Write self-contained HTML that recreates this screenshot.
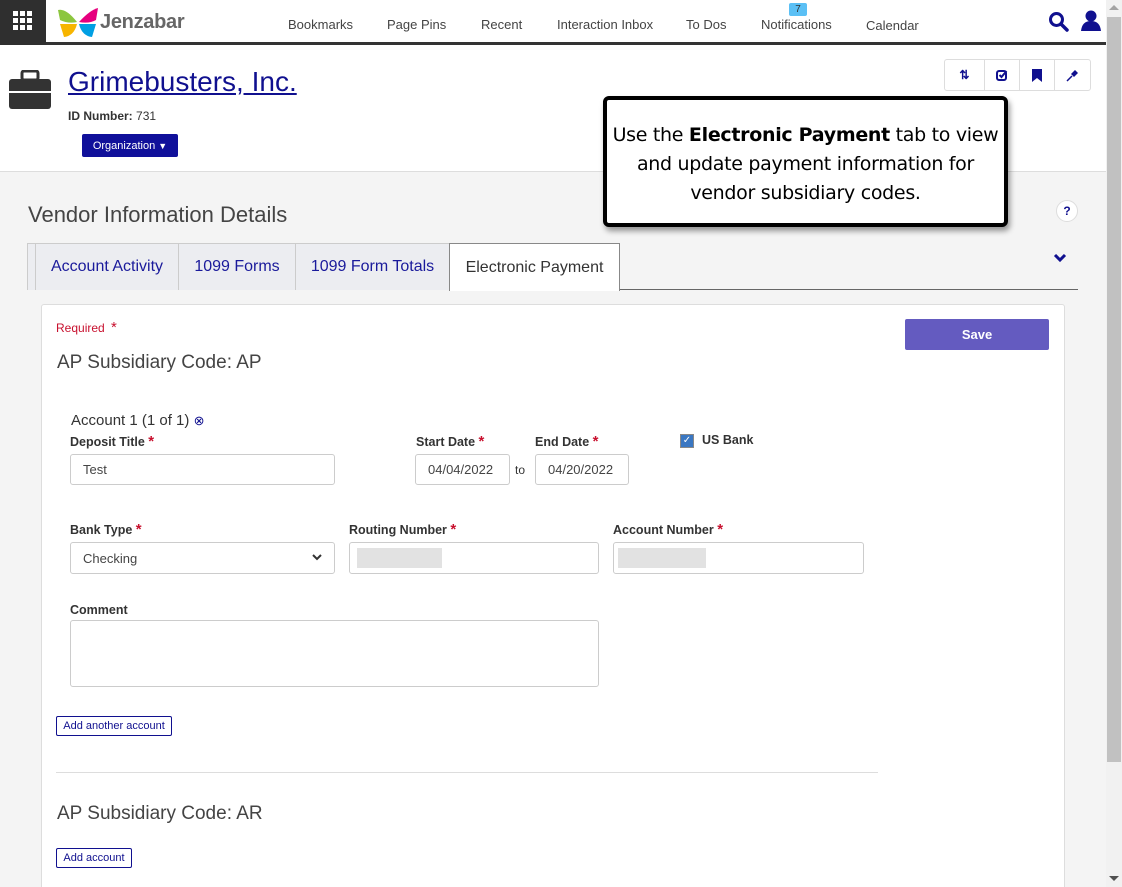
<!DOCTYPE html>
<html><head><meta charset="utf-8"><style>
*{box-sizing:border-box;margin:0;padding:0}
html,body{width:1122px;height:887px;overflow:hidden}
body{position:relative;background:#f4f4f4;font-family:"Liberation Sans",Arial,sans-serif;color:#333}
.a{position:absolute}
.top{left:0;top:0;width:1106px;height:45px;background:#fff;border-bottom:3px solid #333}
.grid{left:0;top:0;width:46px;height:45px;background:#2f2f2f}
.nav{top:17px;font-size:13px;color:#444}
.hdr{left:0;top:45px;width:1106px;height:127px;background:#fff;border-bottom:1px solid #ddd}
.lbl{font-size:12.5px;font-weight:bold;color:#333}
.st{color:#c8102e;font-weight:bold;font-size:15px}
.inp{background:#fff;border:1px solid #ccc;border-radius:3px;font-size:13px;color:#444;padding:0 12px;display:flex;align-items:center}
.h{font-family:"Liberation Sans",sans-serif;color:#444}
.tab{top:243px;height:47px;border:1px solid #ccc;border-bottom:none;background:#ecedf1;color:#1a1a9b;font-size:16px;display:flex;align-items:center;justify-content:center}
.btn{border:1px solid #10108f;border-radius:2px;background:#fff;color:#10108f;font-size:11px;display:flex;align-items:center;justify-content:center}
.blur{background:#e2e2e2;height:20px}
</style></head><body>
<div class="a top"></div>
<div class="a grid"><svg width="46" height="45"><g fill="#fff">
<rect x="13" y="11" width="5" height="5"/><rect x="20" y="11" width="5" height="5"/><rect x="27" y="11" width="5" height="5"/>
<rect x="13" y="18" width="5" height="5"/><rect x="20" y="18" width="5" height="5"/><rect x="27" y="18" width="5" height="5"/>
<rect x="13" y="25" width="5" height="5"/><rect x="20" y="25" width="5" height="5"/><rect x="27" y="25" width="5" height="5"/></g></svg></div>
<svg class="a" style="left:56px;top:6px" width="44" height="33"><path d="M2 4 Q10 2 21 16 Q12 18 4 14Z" fill="#8cc63f"/><path d="M42 2 Q34 4 23 16 Q33 18 40 14Z" fill="#e6007e"/><path d="M4 18 Q14 18 21 18 Q18 30 8 31Z" fill="#f7b500"/><path d="M40 18 Q30 18 23 18 Q26 30 36 31Z" fill="#009fe3"/></svg>
<div class="a" style="left:100px;top:11px;font-size:20px;color:#666;font-weight:bold;letter-spacing:-0.3px">Jenzabar</div>
<div class="a nav" style="left:288px">Bookmarks</div>
<div class="a nav" style="left:387px">Page Pins</div>
<div class="a nav" style="left:481px">Recent</div>
<div class="a nav" style="left:557px">Interaction Inbox</div>
<div class="a nav" style="left:686px">To Dos</div>
<div class="a nav" style="left:761px">Notifications</div>
<div class="a" style="left:789px;top:3px;width:18px;height:13px;background:#5bc0f5;border-radius:2px;font-size:10px;text-align:center;line-height:13px;color:#333">7</div>
<div class="a nav" style="left:866px;top:18px">Calendar</div>
<svg class="a" style="left:1048px;top:11px" width="22" height="22"><circle cx="8.5" cy="8.5" r="6" fill="none" stroke="#10108f" stroke-width="3"/><path d="M13 13 L19 19" stroke="#10108f" stroke-width="3.5" stroke-linecap="round"/></svg>
<svg class="a" style="left:1080px;top:10px" width="22" height="22"><circle cx="11" cy="6" r="5.5" fill="#10108f"/><path d="M1 21 Q2 11 11 11 Q20 11 21 21Z" fill="#10108f"/></svg>
<div class="a hdr"></div>
<svg class="a" style="left:8px;top:70px" width="44" height="40"><rect x="14" y="1" width="16" height="9" rx="2" fill="none" stroke="#333" stroke-width="3"/><rect x="1" y="9" width="42" height="30" rx="3" fill="#333"/><rect x="1" y="21" width="42" height="2" fill="#fff"/></svg>
<div class="a" style="left:68px;top:66px;font-size:28px;color:#10108f;text-decoration:underline;font-family:'Liberation Sans',sans-serif">Grimebusters, Inc.</div>
<div class="a" style="left:68px;top:109px;font-size:12px;font-weight:bold;color:#333">ID Number: <span style="font-weight:normal">731</span></div>
<div class="a" style="left:82px;top:134px;width:96px;height:23px;background:#10109a;border-radius:2px;color:#fff;font-size:11px;display:flex;align-items:center;justify-content:center">Organization&nbsp;<span style="font-size:9px">▼</span></div>
<div class="a" style="left:944px;top:59px;width:147px;height:32px;border:1px solid #ddd;border-radius:3px;background:#fff;display:flex">
<div style="flex:40;border-right:1px solid #ddd;text-align:center;line-height:30px;color:#10108f;font-size:12px;font-weight:bold">⇅</div>
<div style="flex:35;border-right:1px solid #ddd;display:flex;align-items:center;justify-content:center"><svg width="12" height="12"><rect x="1" y="2" width="9" height="9" rx="2" fill="none" stroke="#10108f" stroke-width="2"/><path d="M3.5 6 L5.5 8 L10.5 2" fill="none" stroke="#10108f" stroke-width="2"/></svg></div>
<div style="flex:35;border-right:1px solid #ddd;display:flex;align-items:center;justify-content:center"><svg width="10" height="13"><path d="M0 0H10V13L5 9L0 13Z" fill="#10108f"/></svg></div>
<div style="flex:36;display:flex;align-items:center;justify-content:center"><svg width="13" height="13"><path d="M1 12 L6 7" stroke="#10108f" stroke-width="1.5"/><path d="M5 5 L8 8 L12 4 L9 1Z" fill="#10108f"/></svg></div>
</div>
<div class="a h" style="left:28px;top:202px;font-size:22px">Vendor Information Details</div>
<div class="a" style="left:1056px;top:200px;width:22px;height:22px;border-radius:50%;background:#fff;border:1px solid #ddd;color:#10108f;font-weight:bold;font-size:12px;text-align:center;line-height:20px">?</div>
<svg class="a" style="left:1053px;top:253px" width="14" height="10"><path d="M2 2 L7 7 L12 2" fill="none" stroke="#10108f" stroke-width="3"/></svg>
<div class="a" style="left:27px;top:289px;width:1051px;height:1px;background:#666"></div>
<div class="a tab" style="left:27px;width:9px"></div>
<div class="a tab" style="left:35px;width:144px">Account Activity</div>
<div class="a tab" style="left:178px;width:118px">1099 Forms</div>
<div class="a tab" style="left:295px;width:155px">1099 Form Totals</div>
<div class="a tab" style="left:449px;width:171px;height:48px;background:#fff;color:#333;border-color:#888">Electronic Payment</div>
<div class="a" style="left:41px;top:304px;width:1024px;height:600px;background:#fff;border:1px solid #ddd;border-radius:3px"></div>
<div class="a" style="left:56px;top:319px;font-size:12px;color:#c8102e">Required <span style="font-size:15px;margin-left:3px">*</span></div>
<div class="a" style="left:905px;top:319px;width:144px;height:31px;background:#645bc0;border-radius:2px;color:#fff;font-size:13px;font-weight:bold;display:flex;align-items:center;justify-content:center">Save</div>
<div class="a h" style="left:57px;top:352px;font-size:19px">AP Subsidiary Code: AP</div>
<div class="a" style="left:71px;top:412px;font-size:15px;color:#333">Account 1 (1 of 1) <span style="color:#10108f;font-size:13px">⊗</span></div>
<div class="a lbl" style="left:70px;top:433px">Deposit Title <span class="st">*</span></div>
<div class="a inp" style="left:70px;top:454px;width:265px;height:31px">Test</div>
<div class="a lbl" style="left:416px;top:433px">Start Date <span class="st">*</span></div>
<div class="a lbl" style="left:535px;top:433px">End Date <span class="st">*</span></div>
<div class="a inp" style="left:415px;top:454px;width:95px;height:31px">04/04/2022</div>
<div class="a" style="left:515px;top:463px;font-size:12px;color:#333">to</div>
<div class="a inp" style="left:535px;top:454px;width:94px;height:31px">04/20/2022</div>
<div class="a" style="left:680px;top:434px;width:14px;height:14px;background:#3a77c2;border:1px solid #888;color:#fff;font-size:10px;text-align:center;line-height:12px">✓</div>
<div class="a lbl" style="left:702px;top:433px">US Bank</div>
<div class="a lbl" style="left:70px;top:521px">Bank Type <span class="st">*</span></div>
<div class="a inp" style="left:70px;top:542px;width:265px;height:32px;justify-content:space-between">Checking<svg width="10" height="8"><path d="M1 1 L5 5 L9 1" fill="none" stroke="#333" stroke-width="2"/></svg></div>
<div class="a lbl" style="left:349px;top:521px">Routing Number <span class="st">*</span></div>
<div class="a inp" style="left:349px;top:542px;width:250px;height:32px;padding:0 7px"><div class="blur" style="width:85px"></div></div>
<div class="a lbl" style="left:613px;top:521px">Account Number <span class="st">*</span></div>
<div class="a inp" style="left:613px;top:542px;width:251px;height:32px;padding:0 4px"><div class="blur" style="width:88px"></div></div>
<div class="a lbl" style="left:70px;top:603px">Comment</div>
<div class="a inp" style="left:70px;top:620px;width:529px;height:67px"></div>
<div class="a btn" style="left:56px;top:716px;width:116px;height:20px">Add another account</div>
<div class="a" style="left:56px;top:772px;width:822px;height:1px;background:#ddd"></div>
<div class="a h" style="left:57px;top:803px;font-size:19px">AP Subsidiary Code: AR</div>
<div class="a btn" style="left:56px;top:848px;width:76px;height:20px">Add account</div>
<div class="a" style="left:603px;top:96px;width:405px;height:131px;background:#fff;border:4px solid #000;border-radius:6px;box-shadow:2px 4px 6px rgba(0,0,0,.4);font-family:'DejaVu Sans',sans-serif;font-size:19px;line-height:29px;text-align:center;color:#000;padding-top:21px;letter-spacing:-0.3px">Use the <b>Electronic Payment</b> tab to view<br>and update payment information for<br>vendor subsidiary codes.</div>
<div class="a" style="left:1106px;top:0;width:16px;height:887px;background:#f1f1f1"></div>
<div class="a" style="left:1107px;top:17px;width:14px;height:745px;background:#c1c1c1"></div>
<div class="a" style="left:1109px;top:5px;width:0;height:0;border:5px solid transparent;border-bottom-color:#a3a3a3;border-top:none"></div>
<div class="a" style="left:1109px;top:876px;width:0;height:0;border:5px solid transparent;border-top-color:#505050;border-bottom:none"></div>
</body></html>
